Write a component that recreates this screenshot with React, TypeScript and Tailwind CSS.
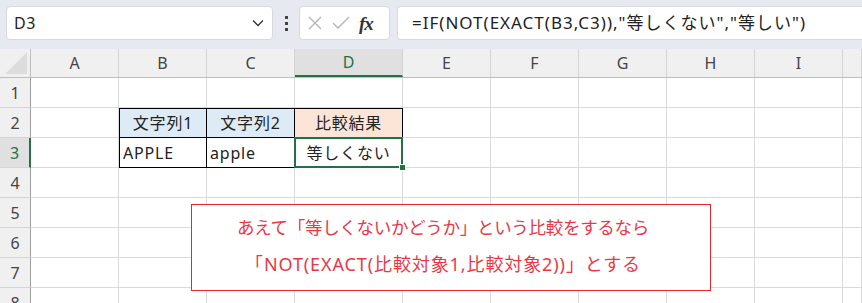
import React from "react";

const cols = ["A", "B", "C", "D", "E", "F", "G", "H", "I", ""];
const widths = ["w-[88px]", "w-[88px]", "w-[88px]", "w-[108px]", "w-[88px]", "w-[88px]", "w-[88px]", "w-[88px]", "w-[88px]", "flex-1"];
const rows = [1, 2, 3, 4, 5, 6, 7, 8];

const jp = "font-['Noto_Sans','Noto_Sans_CJK_JP',sans-serif]";

function Cell({ row, col }: { row: number; col: number }) {
  const base = `${widths[col]} h-full shrink-0 border-r border-b border-[#dadada] flex items-center text-[16px] tracking-[0.8px] text-[#222]`;
  if (row === 2 && (col === 1 || col === 2)) {
    return (
      <div className={`${base} justify-center bg-[#ddebf7] border-t border-t-black border-b-black ${col === 1 ? "border-l border-l-black" : ""} border-r-black`}>
        {col === 1 ? "文字列1" : "文字列2"}
      </div>
    );
  }
  if (row === 2 && col === 3) {
    return (
      <div className={`${base} justify-center bg-[#fce4d6] border-t border-t-black border-r-black border-b-black`}>比較結果</div>
    );
  }
  if (row === 3 && (col === 1 || col === 2)) {
    return (
      <div className={`${base} pl-[3px] border-b-black border-r-black ${col === 1 ? "border-l border-l-black" : ""}`}>
        {col === 1 ? "APPLE" : "apple"}
      </div>
    );
  }
  if (row === 3 && col === 3) {
    return (
      <div className={`${base} relative justify-center border-b-black border-r-black`}>
        <div className="absolute -left-[1px] -top-[1px] -right-[1px] -bottom-[1px] border-2 border-[#217346]" />
        <div className="absolute -right-[4px] -bottom-[4px] w-[7px] h-[7px] bg-[#217346] border border-white" />
        等しくない
      </div>
    );
  }
  return <div className={base} />;
}

export default function App() {
  return (
    <div className={`w-[862px] h-[303px] overflow-hidden bg-white ${jp}`}>
      {/* formula bar */}
      <div className="h-[49px] bg-[#e6e9ef] flex items-start pt-[6px] pl-[6px] gap-[7px]">
        <div className="w-[267px] h-[34px] bg-white rounded-[4px] border border-[#d6d9de] flex items-center justify-between pl-[7px] pr-[8px]">
          <span className="text-[16px] tracking-[0.5px] text-[#222]">D3</span>
          <svg width="12" height="8" viewBox="0 0 12 8"><path d="M1 1.5l5 5 5-5" fill="none" stroke="#333" strokeWidth="1.3" /></svg>
        </div>
        <div className="w-[12px] h-[34px] flex flex-col items-center justify-center gap-[3px]">
          <div className="w-[3px] h-[3px] bg-[#444]" />
          <div className="w-[3px] h-[3px] bg-[#444]" />
          <div className="w-[3px] h-[3px] bg-[#444]" />
        </div>
        <div className="w-[91px] h-[34px] bg-white rounded-[4px] border border-[#d6d9de] flex items-center pl-[7px] gap-[9px]">
          <svg width="16" height="16" viewBox="0 0 16 16"><path d="M2 2l12 12M14 2L2 14" stroke="#b3b3b3" strokeWidth="1.3" /></svg>
          <svg width="18" height="14" viewBox="0 0 18 14"><path d="M1 7l5 5L17 1" fill="none" stroke="#b3b3b3" strokeWidth="1.3" /></svg>
          <span className="font-['Liberation_Serif',serif] italic font-bold text-[19px] text-[#333] leading-none tracking-[-1px]">fx</span>
        </div>
        <div className="flex-1 h-[34px] bg-white rounded-l-[4px] border border-r-0 border-[#d6d9de] flex items-center pl-[14px]">
          <span className="text-[17px] tracking-[1px] text-[#222] whitespace-nowrap">=IF(NOT(EXACT(B3,C3)),"等しくない","等しい")</span>
        </div>
      </div>

      {/* sheet */}
      <div className="relative">
        <div className="flex h-[29px] bg-[#f0f0f0] border-b border-[#bdbdbd]">
          <div className="w-[31px] shrink-0 h-full border-r border-[#bdbdbd] flex items-end justify-end p-[3px]">
            <svg width="22" height="22" viewBox="0 0 22 22"><path d="M22 0V22H0Z" fill="#dcdcdc" /></svg>
          </div>
          {cols.map((c, i) => (
            <div
              key={i}
              className={`${widths[i]} shrink-0 h-full border-r border-[#d4d4d4] flex items-center justify-center text-[16px] ${
                c === "D" ? "bg-[#e0e0e0] text-[#217346] border-b-2 border-b-[#217346]" : "text-[#444]"
              }`}
            >
              {c}
            </div>
          ))}
        </div>
        {rows.map((r) => (
          <div key={r} className="flex h-[30px]">
            <div
              className={`w-[31px] shrink-0 h-full border-b border-[#d4d4d4] flex items-center justify-center text-[16px] ${
                r === 3 ? "bg-[#e0e0e0] text-[#217346] border-r-2 border-r-[#217346]" : "bg-[#f0f0f0] text-[#444] border-r border-r-[#9e9e9e]"
              }`}
            >
              {r}
            </div>
            {cols.map((_, i) => (
              <Cell key={i} row={r} col={i} />
            ))}
          </div>
        ))}

        {/* callout */}
        <div className="absolute left-[191px] top-[155px] w-[520px] h-[87px] bg-white border border-[#e8282f] flex flex-col items-center justify-center gap-[9px] pr-[16px] pb-[5px] text-[18px] text-[#e83848]">
          <div className="leading-[28px] text-[17.5px] tracking-[-0.3px]">あえて「等しくないかどうか」という比較をするなら</div>
          <div className="leading-[28px] tracking-[0.9px]">「NOT(EXACT(比較対象1,比較対象2))」とする</div>
        </div>
      </div>
    </div>
  );
}
